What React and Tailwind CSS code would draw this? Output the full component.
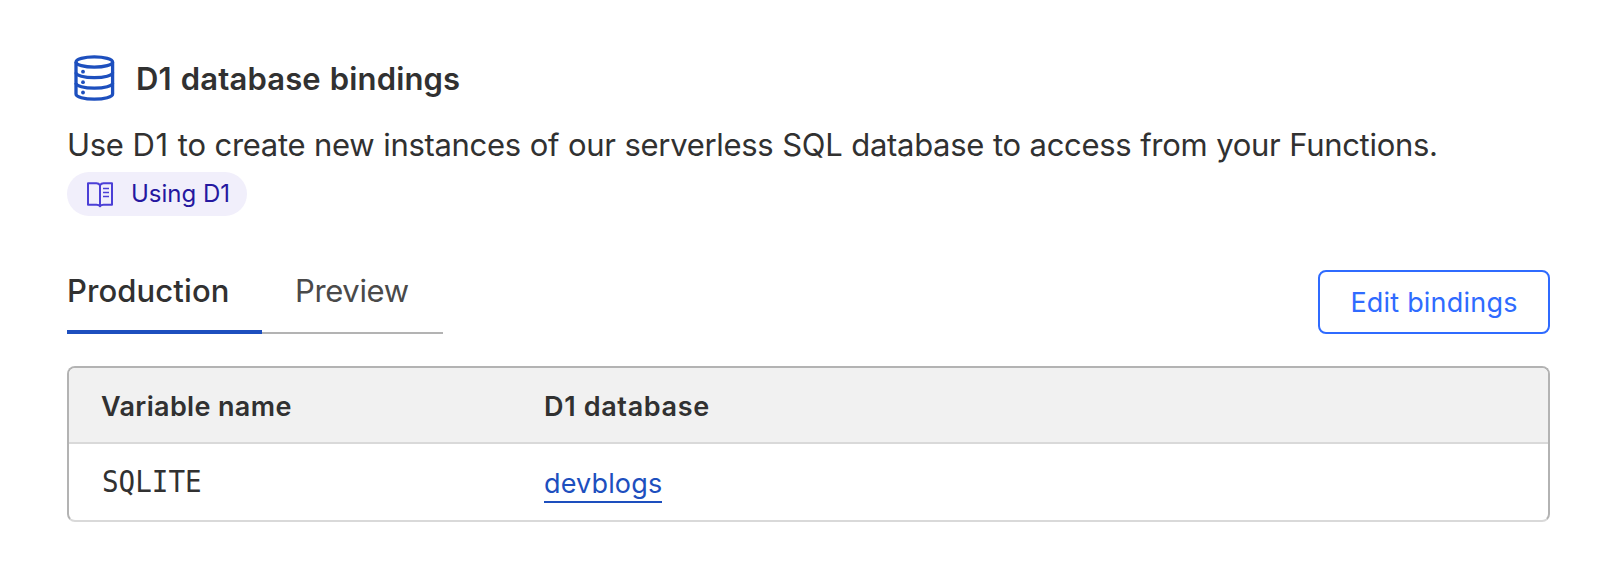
function DatabaseIcon() {
  return (
    <svg width="42" height="48" viewBox="0 0 42 48" fill="none" stroke="#1d4fbe" strokeWidth="3.3">
      <ellipse cx="21.3" cy="8" rx="18.3" ry="5.2" />
      <path d="M3 8v32c0 3 8.200 5.200 18.300 5.200s18.300-2.200 18.300-5.200V8" />
      <path d="M3 18.500c0 3 8.200 5.200 18.300 5.200s18.300-2.200 18.300-5.200" />
      <path d="M3 29c0 3 8.200 5.200 18.300 5.200s18.300-2.200 18.300-5.200" />
      <g fill="#1d4fbe" stroke="none">
        <circle cx="10" cy="17.700" r="1.900" />
        <circle cx="10" cy="28.200" r="1.900" />
        <circle cx="10" cy="38.500" r="1.900" />
      </g>
    </svg>
  );
}

function BookIcon() {
  return (
    <svg className="mt-0.5" width="26" height="26" viewBox="0 0 26 26" fill="none" stroke="#4b3fd6" strokeWidth="2" strokeLinejoin="round">
      <path d="M13 3.200C12 1.600 11 1.200 9.500 1.200H1v21.600h8.500c1.700 0 2.700.300 3.500 1.500.800-1.200 1.800-1.500 3.500-1.500H25V1.200h-8.500C15 1.200 14 1.600 13 3.200z" />
      <path d="M13 3v21.500" />
      <path strokeWidth="1.700" d="M16 6.500h6M16 10.500h6M16 14.500h6" />
    </svg>
  );
}

const bindings = [{ name: "SQLITE", database: "devblogs" }];

export default function App() {
  return (
    <div className="h-[582px] bg-white pl-[67px] pr-12 pt-[54px] font-['Inter',sans-serif] text-[#313131]">
      <div className="flex h-12 items-center gap-[21px] pl-[6px]">
        <DatabaseIcon />
        <h2 className="pt-0.5 text-[31px] leading-[48px] font-semibold tracking-[0.15px] [word-spacing:1px] whitespace-nowrap">D1 database bindings</h2>
      </div>

      <p className="mt-[19px] text-[31px] leading-[48px] tracking-[-0.3px] [word-spacing:0.4px] whitespace-nowrap">
        Use <span className="tracking-[0.8px]">D1</span> to create new instances of our serverless SQL database to access from your Functions.
      </p>

      <a href="#" className="mt-[3px] flex h-11 w-[180px] items-center gap-[18px] rounded-full bg-[#f1effb] pl-5 text-2xl whitespace-nowrap text-[#2518a0]">
        <BookIcon />
        <span>Using D1</span>
      </a>

      <div className="mt-[54px] flex h-16 items-start justify-between">
        <div className="flex h-16 text-[31px] leading-[42px] whitespace-nowrap">
          <button className="flex w-[195px] items-start border-b-4 border-[#1d4fbe] font-medium tracking-[0.1px]">Production</button>
          <button className="flex w-[181px] items-start border-b-2 border-[#b3b3b3] pl-[33px] tracking-[-0.35px] text-[#4a4a4a]">Preview</button>
        </div>
        <button className="h-16 w-[232px] rounded-lg border-2 border-[#2f6bff] pt-[3px] text-[27px] tracking-[0.2px] whitespace-nowrap text-[#2f6bff]">Edit bindings</button>
      </div>

      <div className="mt-8 h-[156px] overflow-hidden rounded-lg border-2 border-[#b3b3b3] border-b-[#d9d9d9] text-[27px]">
        <div className="flex h-[76px] items-center border-b-2 border-[#d9d9d9] bg-[#f1f1f1] pt-1 pl-8 font-semibold">
          <div className="w-[443px] tracking-[0.35px]">Variable name</div>
          <div className="tracking-[0.65px]">D1 database</div>
        </div>
        {bindings.map((b) => (
          <div key={b.name} className="flex h-[76px] items-center pl-8">
            <div className="w-[443px]">
              <span className="mb-0.5 ml-px inline-block origin-left scale-x-[0.92] font-['DejaVu_Sans_Mono',monospace] text-[30px]">{b.name}</span>
            </div>
            <a href="#" className="mt-1 h-[38px] border-b-2 border-[#1d4fbe] leading-[38px] tracking-[0.15px] text-[#1d4fbe]">{b.database}</a>
          </div>
        ))}
      </div>
    </div>
  );
}
